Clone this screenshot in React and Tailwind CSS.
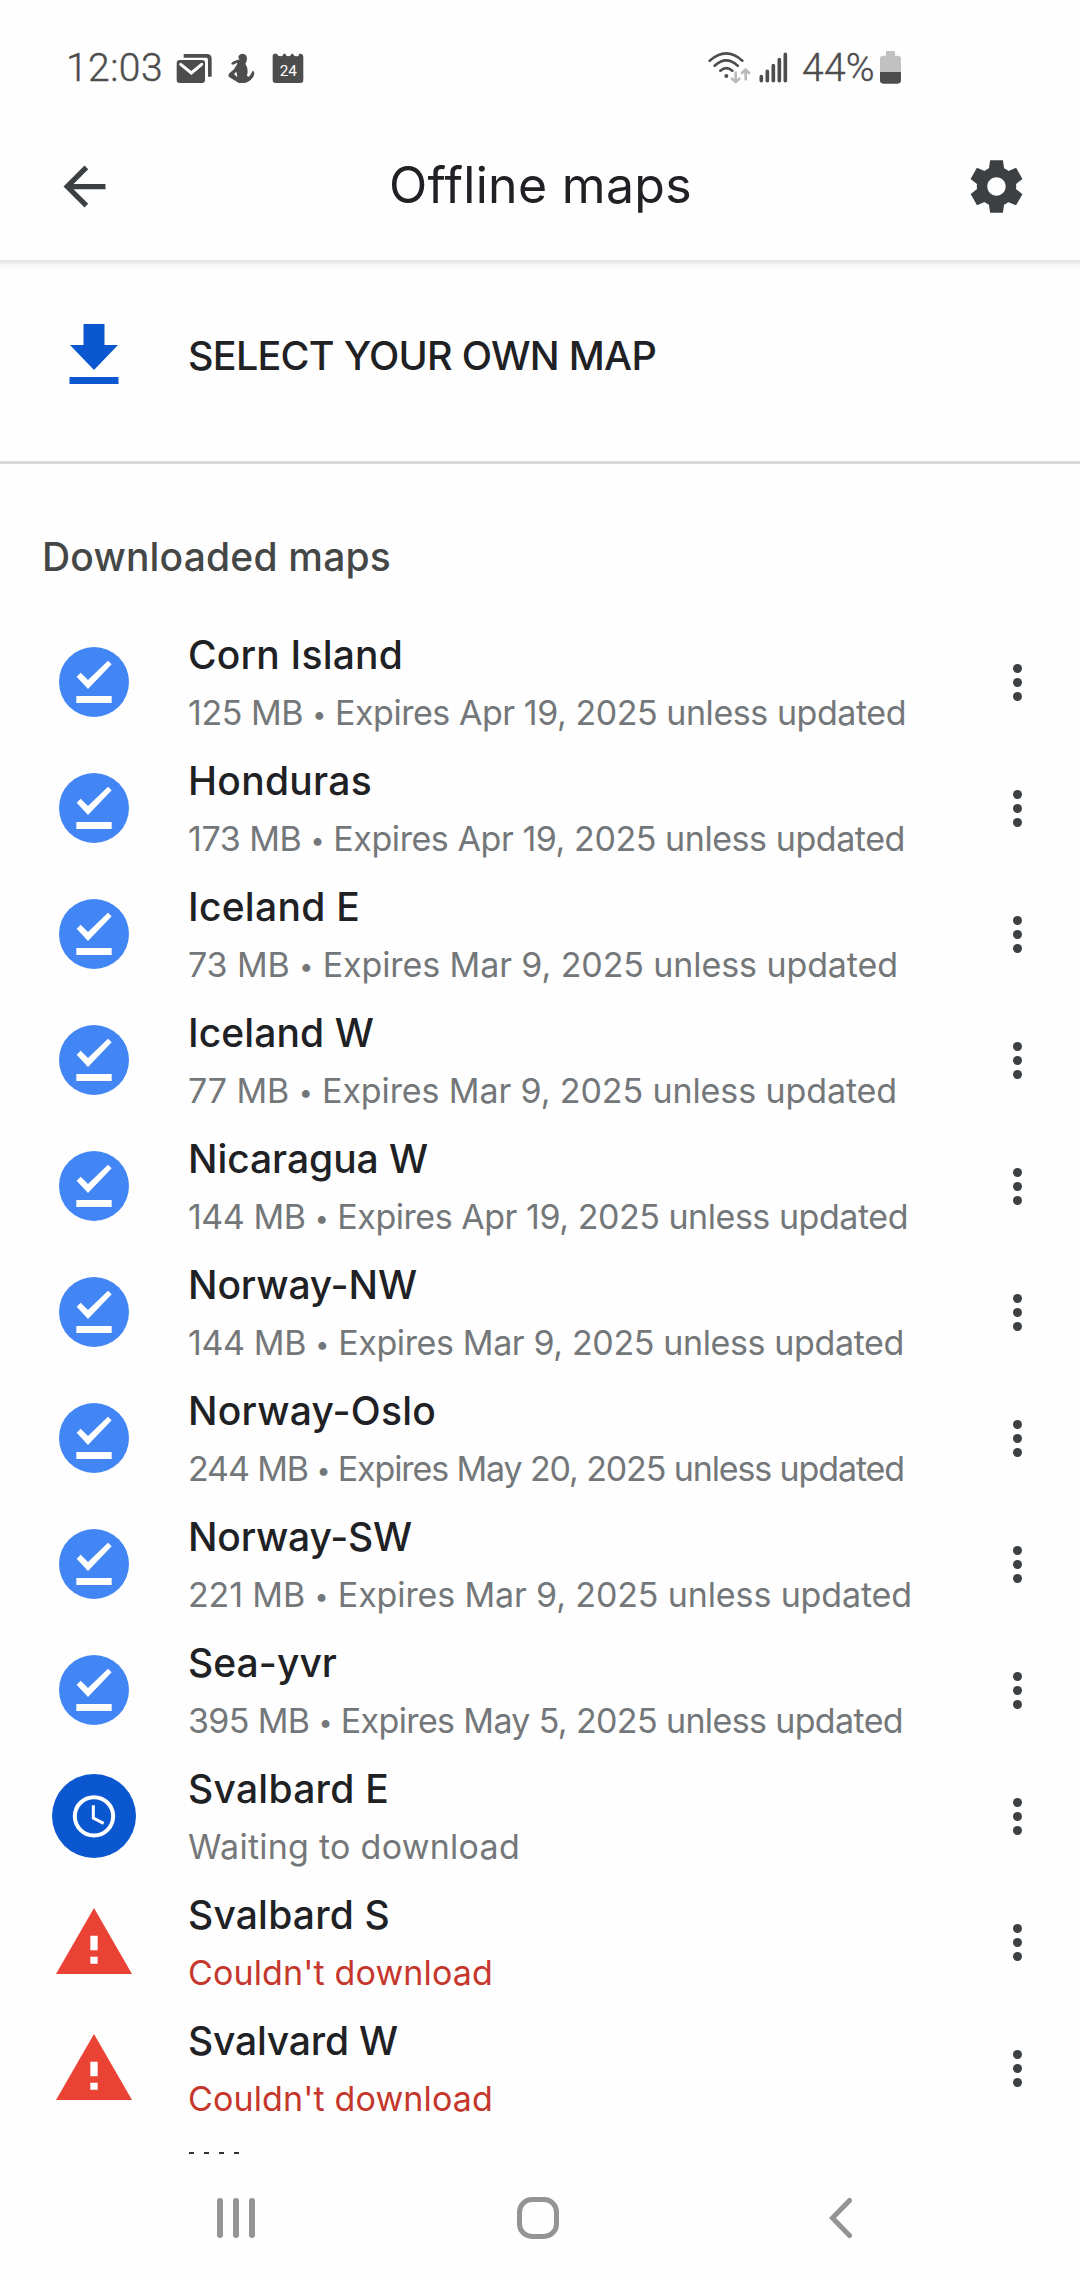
import { useLayoutEffect, useRef, useState } from "react";

const MAPS = [
  { name: "Corn Island", w: 215, detail: "125 MB • Expires Apr 19, 2025 unless updated", dw: 718, kind: "done" },
  { name: "Honduras", w: 184, detail: "173 MB • Expires Apr 19, 2025 unless updated", dw: 717, kind: "done" },
  { name: "Iceland E", w: 172, detail: "73 MB • Expires Mar 9, 2025 unless updated", dw: 710, kind: "done" },
  { name: "Iceland W", w: 186, detail: "77 MB • Expires Mar 9, 2025 unless updated", dw: 709, kind: "done" },
  { name: "Nicaragua W", w: 240, detail: "144 MB • Expires Apr 19, 2025 unless updated", dw: 720, kind: "done" },
  { name: "Norway-NW", w: 229, detail: "144 MB • Expires Mar 9, 2025 unless updated", dw: 716, kind: "done" },
  { name: "Norway-Oslo", w: 248, detail: "244 MB • Expires May 20, 2025 unless updated", dw: 716, kind: "done" },
  { name: "Norway-SW", w: 224, detail: "221 MB • Expires Mar 9, 2025 unless updated", dw: 724, kind: "done" },
  { name: "Sea-yvr", w: 149, detail: "395 MB • Expires May 5, 2025 unless updated", dw: 715, kind: "done" },
  { name: "Svalbard E", w: 201, detail: "Waiting to download", dw: 332, kind: "waiting" },
  { name: "Svalbard S", w: 202, detail: "Couldn't download", dw: 305, kind: "error" },
  { name: "Svalvard W", w: 210, detail: "Couldn't download", dw: 305, kind: "error" },
];

// Text whose tracking is adjusted so that it fills the given width.
function FitText({ width, className, children }) {
  const ref = useRef(null);
  const [spacing, setSpacing] = useState(0);
  useLayoutEffect(() => {
    const natural = ref.current.getBoundingClientRect().width;
    setSpacing((width - natural) / children.length);
  }, [width, children]);
  const [before, after] = children.split("•");
  return (
    <div className={className}>
      <span ref={ref} className="inline-block whitespace-nowrap" style={{ letterSpacing: spacing }}>
        {before}
        {after !== undefined && <span className="relative -top-[2px] text-[25px] leading-none">•</span>}
        {after}
      </span>
    </div>
  );
}

function DoneIcon() {
  return (
    <svg viewBox="87 381 210 210" className="size-[70px]">
      <circle cx="192" cy="486" r="105" fill="#4285f4" />
      <path d="M140 470l12-12 22 22 60-58 11 11-71 74z M139 528h106v21H139z" fill="#fff" />
    </svg>
  );
}

function WaitingIcon() {
  return (
    <svg viewBox="36 102 252 252" className="size-[84px]" fill="none" stroke="#fff">
      <circle cx="162" cy="228" r="126" fill="#0b57d0" stroke="none" />
      <circle cx="162" cy="229" r="57.5" strokeWidth="12" />
      <path d="M160 196v38l31 16" strokeWidth="9" />
    </svg>
  );
}

function ErrorIcon() {
  return (
    <svg viewBox="48 502 228 198" className="h-[66px] w-[76px]">
      <path d="M162 502l114 198H48z" fill="#ea4335" />
      <path d="M151 585h22v44h-22z M151 648h22v21h-22z" fill="#fff" />
    </svg>
  );
}

const ICONS = { done: DoneIcon, waiting: WaitingIcon, error: ErrorIcon };

function StatusBar() {
  return (
    <div className="flex h-[94px] items-start pt-[43px] pl-[66px] text-[#4d4d4d]">
      <FitText width={97} className="w-[97px] font-['Roboto'] text-[39px] leading-[50px] font-light [-webkit-text-stroke:0.4px_#4d4d4d]">12:03</FitText>
      <svg viewBox="400 60 410 110" className="mt-[7px] ml-[10px] h-[36.67px] w-[136.67px]" fill="#4d4d4d">
        <path d="M432 72h70q14 0 14 14v54h-11V89q0-6-6-6h-67z" />
        <rect x="411" y="90" width="85" height="69" rx="9" />
        <path d="M423 103l32 26 31-26" fill="none" stroke="#fff" strokeWidth="9" strokeLinecap="round" />
        <path d="M597 77q5-6 12-6 14 2 13 17-1 9-5 13 7 9 7 22 0 8-2 14l4 4q8-6 12-17l5 0q3 9-2 16-7 11-17 16-6 3-12 3h-14q-5-1-9-5l-22-14q-2-5 2-10l14-12q5-9 10-17l-1-3-11 6-7-2q3-8 12-10l14-4-3-3q-2-4 0-8z" />
        <path d="M583 132l7-7 3 17z" fill="#fff" />
        <path d="M704 71h8q2 8 10 8t10-8h5q2 8 9 8t10-8h4q2 8 10 8t9-8h5q7 2 7 8v71q0 9-9 9h-74q-9 0-9-9V78q0-6 5-7z" />
        <text x="746" y="137" textAnchor="middle" fill="#fff" fontFamily="Roboto" fontSize="46" fontWeight="400">24</text>
      </svg>
      <svg viewBox="80 60 250 110" className="mt-[7px] ml-[397px] h-[36.67px] w-[83.33px]" fill="none" stroke="#4d4d4d" strokeLinecap="round" strokeWidth="8">
        <path d="M88 92q50-44 98 0M103 107q35-32 69 0M120 122q18-15 36 0" />
        <circle cx="138" cy="138" r="6" fill="#4d4d4d" stroke="none" />
        <path d="M166 128v27M155 146l11 10 11-10M196 148v-27M185 129l11-10 10 10" stroke="#b9b9b9" />
        <path d="M243 140v12M261 124v28M279 107v45M297 89v63M315 73v79" strokeWidth="11" />
      </svg>
      <FitText width={73} className="ml-[12px] w-[73px] font-['Roboto'] text-[39px] leading-[50px] font-light [-webkit-text-stroke:0.4px_#4d4d4d]">44%</FitText>
      <svg viewBox="600 63 64 99" className="mt-[8px] ml-[5px] h-[33px] w-[21.3px]">
        <path d="M618 67q0-4 4-4h19q4 0 4 4v10h8q10 0 10 10v40h-63V87q0-10 10-10h8z" fill="#c1c1c1" />
        <path d="M600 126h63v25q0 10-10 10h-43q-10 0-10-10z" fill="#4d4d4d" />
      </svg>
    </div>
  );
}

function Header() {
  return (
    <header className="flex h-[166px] items-start justify-between pr-[52px] pl-[53px]">
      <svg viewBox="0 0 24 24" className="mt-[61px] size-[63px]" fill="#3c4043">
        <path d="M20 11H7.83l5.59-5.59L12 4l-8 8 8 8 1.41-1.41L7.83 13H20v-2z" />
      </svg>
      <FitText width={303} className="mt-[61px] w-[303px] text-[50px] leading-[60px] text-[#202124]">Offline maps</FitText>
      <svg viewBox="0 0 24 24" className="mt-[61px] size-[63px]" fill="#3c4043">
        <path d="M19.44 12.99l-.01.02c.04-.33.08-.67.08-1.01 0-.34-.03-.66-.07-.99l.01.02 2.44-1.92-2.43-4.22-2.87 1.16.01.01c-.52-.4-1.09-.74-1.71-1h.01L14.44 2H9.57l-.44 3.07h.01c-.62.26-1.19.6-1.71 1l.01-.01-2.88-1.17-2.44 4.22 2.44 1.92.01-.02c-.04.33-.07.65-.07.99 0 .34.03.68.08 1.01l-.01-.02-2.1 1.65-.33.26 2.43 4.2 2.88-1.15-.02-.04c.53.41 1.1.75 1.73 1.01h-.03L9.58 22h4.85s.03-.18.06-.42l.38-2.65h-.01c.62-.26 1.2-.6 1.73-1.01l-.02.04 2.88 1.15 2.43-4.2s-.14-.12-.33-.26l-2.11-1.66zM12 15.5c-1.93 0-3.5-1.57-3.5-3.5s1.57-3.5 3.5-3.5 3.5 1.57 3.5 3.5-1.57 3.5-3.5 3.5z" />
      </svg>
    </header>
  );
}

function MapRow({ map }) {
  const Icon = ICONS[map.kind];
  return (
    <li className="flex h-[126px]">
      <div className={map.kind === "error" ? "flex w-[188px] items-center pl-[56px] pb-[3px]" : map.kind === "waiting" ? "flex w-[188px] items-center pl-[52px]" : "flex w-[188px] items-center pl-[59px]"}>
        <Icon />
      </div>
      <div className="flex-1 pt-[12px]">
        <FitText width={map.w} className="h-[48px] text-[39px] leading-[48px] font-medium text-[#202124]">{map.name}</FitText>
        <FitText width={map.dw} className={map.kind === "error" ? "mt-[14px] h-[40px] text-[34px] leading-[40px] text-[#c5372c]" : "mt-[14px] h-[40px] text-[34px] leading-[40px] text-[#747779]"}>{map.detail}</FitText>
      </div>
      <div className="flex w-[67px] flex-col items-start justify-center gap-[5px]">
        <span className="size-[9px] rounded-full bg-[#3c4043]" />
        <span className="size-[9px] rounded-full bg-[#3c4043]" />
        <span className="size-[9px] rounded-full bg-[#3c4043]" />
      </div>
    </li>
  );
}

export default function App() {
  return (
    <div className="flex h-[2280px] w-[1080px] flex-col overflow-hidden bg-[#fefefe] font-['Inter',sans-serif]">
      <StatusBar />
      <Header />
      <div className="h-[10px] bg-linear-to-b from-[#e2e2e2] via-[#f7f7f7] to-[#fefefe]" />
      <section className="flex h-[191px] pt-[54px]">
        <svg viewBox="0 0 50 60" className="ml-[69px] h-[60px] w-[50px] shrink-0" fill="#0b57d0">
          <path d="M14.5 0h21v21H49L25 46 1 21h13.5z M0.5 53h49v7H0.5z" />
        </svg>
        <FitText width={468} className="mt-[2px] ml-[69px] text-[39.5px] leading-[60px] font-medium text-[#202124]">SELECT YOUR OWN MAP</FitText>
      </section>
      <div className="h-[3px] bg-[#dadada]" />
      <FitText width={349} className="h-[155px] pt-[69px] pl-[42px] text-[39px] leading-[48px] font-medium text-[#444746]">Downloaded maps</FitText>
      <ul className="h-[1512px]">
        {MAPS.map((map) => <MapRow key={map.name} map={map} />)}
      </ul>
      <div className="flex gap-[10px] pt-[21px] pl-[189px]">
        {[0, 1, 2, 3].map((i) => <span key={i} className="h-[2px] w-[5px] bg-[#333]" />)}
      </div>
      <nav className="mt-[43px] flex h-[42px] items-center">
        <div className="ml-[217px] flex gap-[10px]">
          {[0, 1, 2].map((i) => <span key={i} className="h-[40px] w-[6px] rounded-full bg-[#949494]" />)}
        </div>
        <div className="ml-[262px] size-[42px] rounded-[15px] border-5 border-[#949494]" />
        <svg viewBox="0 0 24 42" className="ml-[269px] h-[42px] w-[24px]" fill="none" stroke="#949494" strokeWidth="5" strokeLinecap="round">
          <path d="M21.5 3.5L4.5 21l17 17.5" />
        </svg>
      </nav>
    </div>
  );
}
